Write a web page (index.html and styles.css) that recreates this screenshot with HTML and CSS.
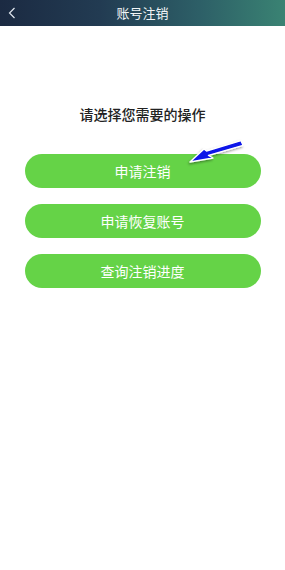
FILE: index.html
```html
<!DOCTYPE html>
<html lang="zh">
<head>
<meta charset="utf-8">
<link rel="stylesheet" href="styles.css">
</head>
<body>
<header class="topbar">
  <span class="back">
    <svg width="8" height="12" viewBox="0 0 8 12"><path d="M6.5 1 L1.5 6 L6.5 11" fill="none" stroke="#dfe6ee" stroke-width="1.2"/></svg>
  </span>
  <h1 class="title">账号注销</h1>
</header>
<main class="content">
  <p class="prompt">请选择您需要的操作</p>
  <div class="actions">
    <div class="btn-wrap">
      <button class="btn">申请注销</button>
      <svg class="pointer" width="66" height="32" viewBox="0 0 66 32">
        <defs>
          <filter id="sh" x="-20%" y="-40%" width="140%" height="180%">
            <feDropShadow dx="-1" dy="1.5" stdDeviation="1" flood-color="#000" flood-opacity="0.4"/>
          </filter>
        </defs>
        <g filter="url(#sh)">
          <path d="M7 26 L21 13 L23.5 15 L58 4.7 L60 9.3 L25.5 19.5 L30 22 Z" fill="#0a12e8" stroke="#fff" stroke-width="1.4" stroke-linejoin="round"/>
        </g>
      </svg>
    </div>
    <button class="btn">申请恢复账号</button>
    <button class="btn">查询注销进度</button>
  </div>
</main>
</body>
</html>
```
FILE: styles.css
```css
* { box-sizing: border-box; }
html, body { margin: 0; padding: 0; background: #fff; }
body {
  width: 285px;
  height: 570px;
  font-family: "Noto Sans CJK SC", "Noto Sans", sans-serif;
}
.topbar {
  height: 26px;
  display: flex;
  align-items: center;
  justify-content: center;
  position: relative;
  background: linear-gradient(90deg, #1b2a42 0%, #223b52 35%, #2d5f67 70%, #3a8373 100%);
}
.back {
  position: absolute;
  left: 8px;
  top: 7px;
  display: flex;
}
.title {
  margin: 0;
  font-size: 13px;
  font-weight: 400;
  color: #f2f5f7;
  line-height: 26px;
}
.content {
  display: flex;
  flex-direction: column;
  align-items: center;
  padding-top: 78px;
}
.prompt {
  margin: 0;
  font-size: 14px;
  font-weight: 500;
  color: #222;
  line-height: 20px;
}
.actions {
  margin-top: 30px;
  display: flex;
  flex-direction: column;
  gap: 16px;
  width: 236px;
}
.btn-wrap { position: relative; }
.btn {
  width: 236px;
  height: 34px;
  border: none;
  border-radius: 17px;
  background: #65d347;
  color: #fff;
  font-family: "Noto Sans CJK SC", "Noto Sans", sans-serif;
  font-size: 14px;
  padding: 0;
  display: block;
}
.pointer {
  position: absolute;
  left: 158px;
  top: -18px;
}
```
